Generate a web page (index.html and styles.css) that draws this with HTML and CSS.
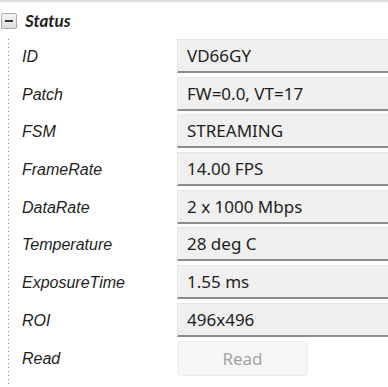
FILE: index.html
```html
<!DOCTYPE html>
<html lang="en">

<head>
    <meta charset="UTF-8">
    <title>Sensor Status</title>
    <link rel="stylesheet" href="styles.css">
</head>

<body>
    <div class="prop_wrap">
        <div class="group_head">
            <span class="toggle"><span class="minus"></span></span>
            <strong>Status</strong>
        </div>
        <div class="group_body">
            <div class="prop_row">
                <div class="label">ID</div>
                <div class="value">VD66GY</div>
            </div>
            <div class="prop_row">
                <div class="label">Patch</div>
                <div class="value">FW=0.0, VT=17</div>
            </div>
            <div class="prop_row">
                <div class="label">FSM</div>
                <div class="value">STREAMING</div>
            </div>
            <div class="prop_row">
                <div class="label">FrameRate</div>
                <div class="value">14.00 FPS</div>
            </div>
            <div class="prop_row">
                <div class="label">DataRate</div>
                <div class="value">2 x 1000 Mbps</div>
            </div>
            <div class="prop_row">
                <div class="label">Temperature</div>
                <div class="value">28 deg C</div>
            </div>
            <div class="prop_row">
                <div class="label">ExposureTime</div>
                <div class="value">1.55 ms</div>
            </div>
            <div class="prop_row">
                <div class="label">ROI</div>
                <div class="value">496x496</div>
            </div>
            <div class="prop_row">
                <div class="label">Read</div>
                <button class="read_btn" disabled>Read</button>
            </div>
        </div>
    </div>
</body>

</html>
```

FILE: styles.css
```css
* {
    margin: 0;
    padding: 0;
    box-sizing: border-box;
}

html,
body {
    width: 388px;
    height: 387px;
    overflow: hidden;
    background: #ffffff;
}

body {
    font-family: "Noto Sans", "Open Sans", sans-serif;
    color: #1e1e1e;
}

.prop_wrap {
    border-top: 2px solid #dcdcdc;
}

.group_head {
    display: flex;
    align-items: center;
    height: 37px;
    padding-left: 1px;
}

.toggle {
    display: flex;
    align-items: center;
    justify-content: center;
    width: 16px;
    height: 16px;
    border: 1px solid #a9a9a9;
    border-radius: 2px;
    background: linear-gradient(#f4f4f4, #dedede);
}

.toggle .minus {
    width: 8px;
    height: 2px;
    background: #3a3a3a;
}

.group_head strong {
    margin-left: 8px;
    font-family: Lato, sans-serif;
    font-size: 17px;
    font-style: italic;
    font-weight: bold;
}

/* tree guide line: sparse grey dots */
.group_body {
    margin-left: 8px;
    padding-left: 1px;
    padding-bottom: 6px;
    background: repeating-linear-gradient(#8a8a8a 0 1px, transparent 1px 4px) left top / 1px 100% no-repeat;
}

.prop_row {
    display: flex;
    align-items: flex-start;
    height: 37.7px;
}

.prop_row .label {
    width: 168px;
    height: 34px;
    padding-left: 13px;
    line-height: 36px;
    font-family: "Liberation Sans", Arial, sans-serif;
    font-size: 16px;
    font-style: italic;
}

.prop_row .value {
    flex: 1;
    height: 34px;
    padding-left: 9px;
    line-height: 32px;
    font-size: 17px;
    background: #f0f0f0;
    border-top: 1px solid #e6e6e6;
    border-left: 1px solid #e6e6e6;
    border-bottom: 2px solid #8c8c8c;
}

.read_btn {
    width: 131px;
    height: 35px;
    font-family: inherit;
    font-size: 17px;
    color: #a3a3a3;
    background: #f6f6f6;
    border: 1px solid #ececec;
    border-radius: 4px;
}
```
